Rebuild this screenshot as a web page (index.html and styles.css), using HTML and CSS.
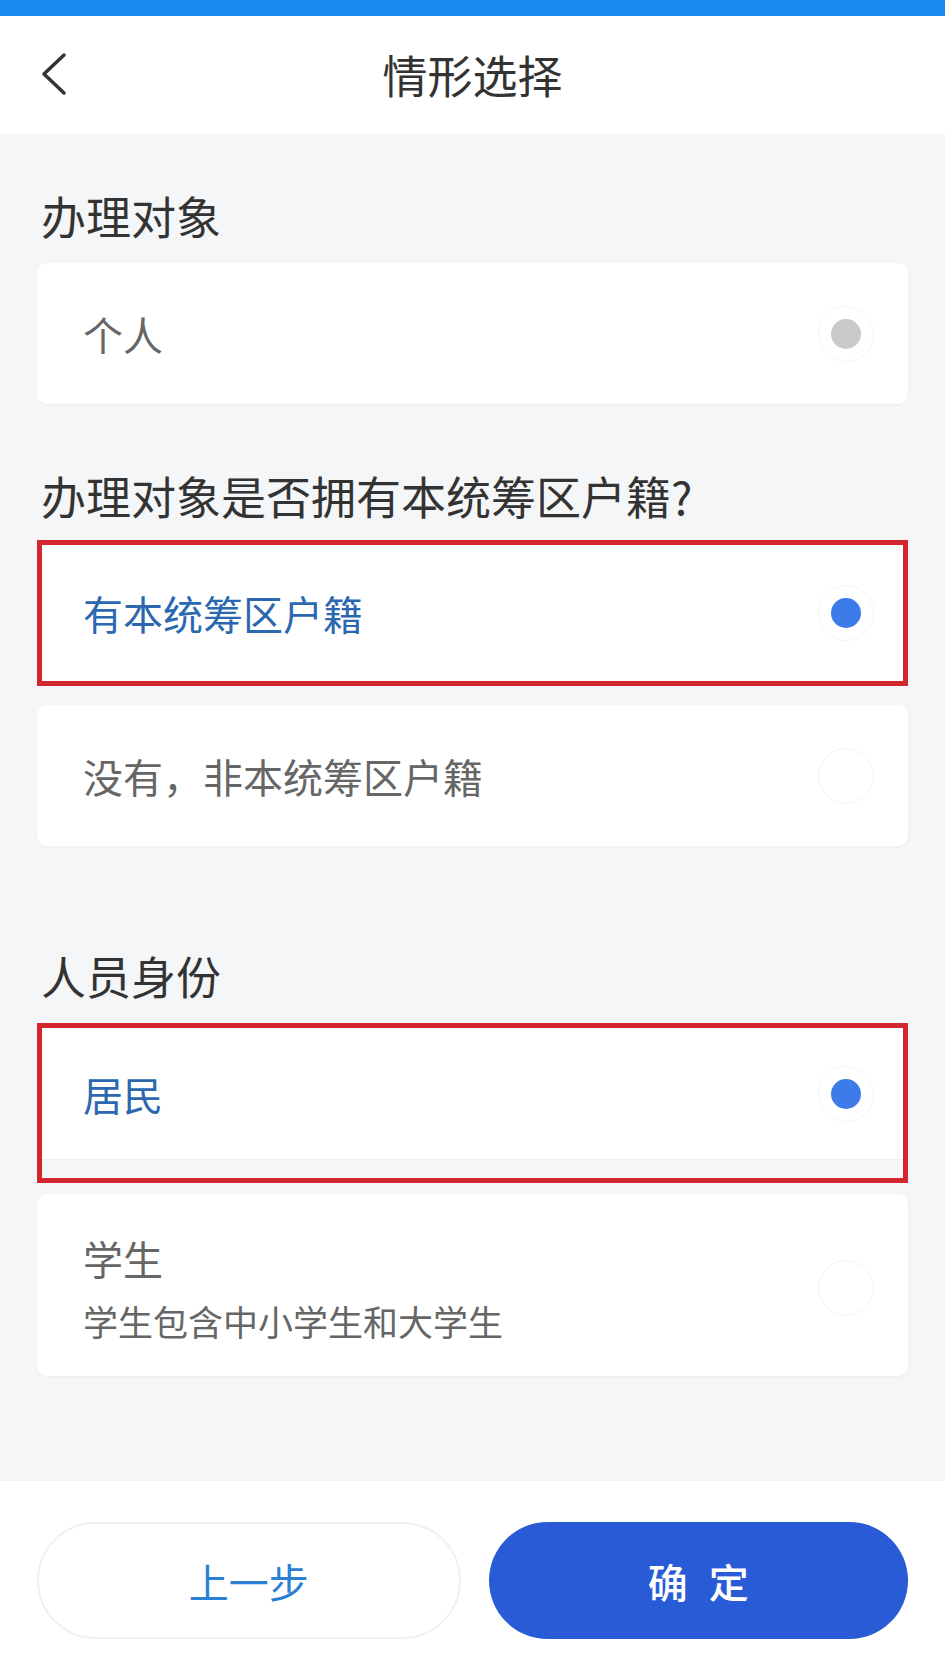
FILE: index.html
```html
<!DOCTYPE html>
<html lang="zh-CN">
<head>
    <meta charset="UTF-8">
    <meta name="viewport" content="width=device-width, initial-scale=1.0">
    <title>情形选择</title>
    <link rel="stylesheet" href="styles.css">
</head>
<body>

    <!-- Status bar -->
    <div class="status-bar"></div>

    <!-- Nav bar -->
    <header class="navbar">
        <span class="back">
            <svg width="27" height="44" viewBox="0 0 27 44">
                <polyline points="24,3 4,22 24,41" fill="none" stroke="#333" stroke-width="3.5" stroke-linecap="round" stroke-linejoin="round"/>
            </svg>
        </span>
        <h1 class="title">情形选择</h1>
    </header>

    <main class="content">

        <section class="section">
            <h2 class="section-title">办理对象</h2>
            <div class="option">
                <span class="option-text">个人</span>
                <span class="radio disabled"><i></i></span>
            </div>
        </section>

        <section class="section">
            <h2 class="section-title">办理对象是否拥有本统筹区户籍?</h2>
            <div class="mark">
                <div class="option checked">
                    <span class="option-text">有本统筹区户籍</span>
                    <span class="radio"><i></i></span>
                </div>
            </div>
            <div class="option">
                <span class="option-text">没有，非本统筹区户籍</span>
                <span class="radio empty"></span>
            </div>
        </section>

        <section class="section spaced">
            <h2 class="section-title">人员身份</h2>
            <div class="mark tall">
                <div class="option checked short">
                    <span class="option-text">居民</span>
                    <span class="radio"><i></i></span>
                </div>
            </div>
            <div class="option tall-card">
                <div>
                    <div class="option-text">学生</div>
                    <div class="option-sub">学生包含中小学生和大学生</div>
                </div>
                <span class="radio empty"></span>
            </div>
        </section>

    </main>

    <footer class="footer">
        <button class="btn btn-ghost">上一步</button>
        <button class="btn btn-primary">确 定</button>
    </footer>

</body>
</html>
```

FILE: styles.css
```css
/* General */
body {
    margin: 0;
    min-height: 1676px;
    display: flex;
    flex-direction: column;
    background-color: #f5f6f8;
    font-family: "Noto Sans CJK SC", "Noto Sans", sans-serif;
    color: #333;
}

.status-bar {
    height: 16px;
    background-color: #1a8cf0;
}

/* Nav bar */
.navbar {
    height: 118px;
    background: #fff;
    display: flex;
    align-items: center;
    justify-content: center;
    position: relative;
}

.back {
    position: absolute;
    left: 40px;
    top: 36px;
    display: flex;
}

.title {
    margin: 0;
    font-size: 45px;
    font-weight: 400;
    color: #333;
    line-height: 60px;
}

/* Content */
.content {
    flex: 1;
    padding: 52px 37px 0;
}

.section + .section {
    margin-top: 62px;
}

.section.spaced {
    margin-top: 100px;
}

.section-title {
    margin: 0 0 14px;
    font-size: 45px;
    font-weight: 400;
    line-height: 60px;
    color: #333;
    padding-left: 4px;
}

.section:first-child .section-title {
    margin-bottom: 17px;
}

.spaced .section-title {
    margin-bottom: 17px;
}

.option {
    background: #fff;
    border-radius: 10px;
    height: 141px;
    box-sizing: border-box;
    padding: 0 34px 0 46px;
    display: flex;
    align-items: center;
    justify-content: space-between;
    box-shadow: 0 1px 3px rgba(0, 0, 0, 0.04);
    margin-bottom: 19px;
}

.option-text {
    font-size: 40px;
    line-height: 52px;
    color: #666;
}

.option-sub {
    font-size: 35px;
    line-height: 46px;
    color: #666;
    margin-top: 14px;
}

.option.tall-card {
    height: 182px;
    padding-top: 6px;
}

.option.checked .option-text {
    color: #2b68b0;
}

/* red annotation box */
.mark {
    border: 5px solid #d3262f;
    margin-bottom: 19px;
    background: #f5f6f8;
}

.mark .option {
    margin: 0;
    height: 136px;
    border-radius: 0;
    box-shadow: none;
    padding-left: 41px;
    padding-right: 29px;
}

.mark.tall {
    margin-bottom: 11px;
    padding-bottom: 18px;
}

.mark .option.short {
    height: 132px;
    border-bottom: 1px solid #eceef1;
}

/* Radio */
.radio {
    width: 56px;
    height: 56px;
    border-radius: 50%;
    border: 1px solid #f4f5f6;
    box-sizing: border-box;
    display: flex;
    align-items: center;
    justify-content: center;
    flex-shrink: 0;
}

.radio i {
    width: 30px;
    height: 30px;
    border-radius: 50%;
    background: #3d7be8;
}

.radio.disabled i {
    background: #c9c9c9;
}

.radio.empty {
    border-color: #f2f3f5;
}

/* Footer */
.footer {
    background: #fff;
    height: 195px;
    box-sizing: border-box;
    padding: 41px 37px 0;
    display: flex;
    gap: 28px;
    box-shadow: 0 -1px 3px rgba(0, 0, 0, 0.03);
}

.btn {
    flex: 1;
    height: 117px;
    border-radius: 59px;
    font-family: "Noto Sans CJK SC", "Noto Sans", sans-serif;
    font-size: 40px;
    cursor: pointer;
}

.btn-ghost {
    background: #fff;
    border: 2px solid #eff0f3;
    color: #2b7fd4;
}

.btn-primary {
    background: #2a5bd6;
    border: none;
    color: #fff;
    font-weight: 500;
    word-spacing: 12px;
}
```
